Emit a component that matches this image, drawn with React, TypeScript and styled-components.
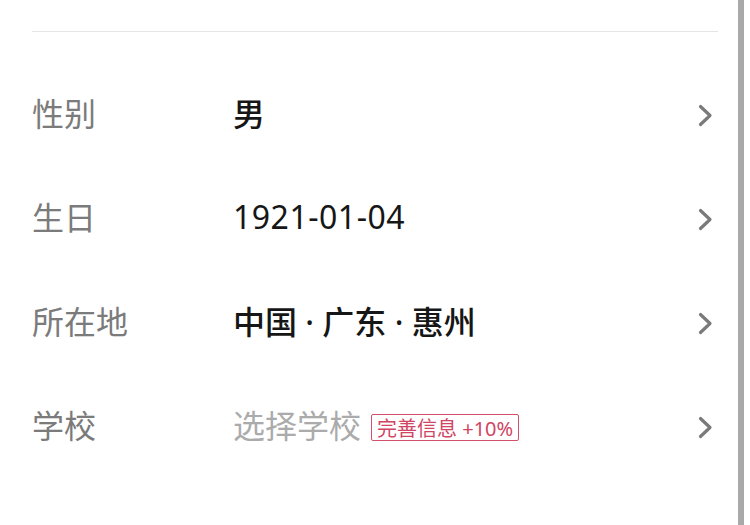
import React from 'react';
import styled, { createGlobalStyle } from 'styled-components';

const GlobalStyle = createGlobalStyle`
  html, body {
    margin: 0;
    padding: 0;
    background: #ffffff;
    font-family: "Noto Sans", "Noto Sans CJK SC", sans-serif;
  }
`;

const Page = styled.div`
  display: flex;
  width: 750px;
  height: 525px;
  overflow: hidden;
  background: #ffffff;
`;

const Content = styled.div`
  flex: 1;
  padding: 31px 20px 0 32px;
`;

const Divider = styled.div`
  height: 1px;
  background: #e6e6e6;
  margin-bottom: 31px;
`;

const List = styled.div`
  display: flex;
  flex-direction: column;
`;

const Row = styled.div`
  display: flex;
  align-items: center;
  height: 104px;
  padding-right: 5px;
`;

const Label = styled.div`
  width: 201px;
  flex-shrink: 0;
  padding-bottom: 6px;
  font-size: 32px;
  color: #7b7b7b;
  font-family: "Noto Sans CJK SC", sans-serif;
`;

const Value = styled.div<{ $placeholder?: boolean }>`
  flex: 1;
  display: flex;
  align-items: center;
  padding-bottom: 6px;
  font-size: 32px;
  font-weight: ${p => (p.$placeholder ? 400 : 500)};
  color: ${p => (p.$placeholder ? '#ababab' : '#161616')};
  white-space: pre;
`;

const Digits = styled.span`
  font-weight: 400;
  letter-spacing: 0.5px;
`;

const Tag = styled.span`
  margin-left: 10px;
  margin-top: 6px;
  height: 27px;
  box-sizing: border-box;
  display: inline-flex;
  align-items: center;
  padding: 0 5px;
  border: 1px solid #d2506c;
  border-radius: 2px;
  font-size: 20px;
  font-weight: 400;
  color: #cf4563;
  font-family: "Noto Sans", "Noto Sans CJK SC", sans-serif;
`;

const Chevron = styled.svg`
  width: 15px;
  height: 23px;
  flex-shrink: 0;
`;

const ScrollTrack = styled.div`
  width: 12px;
  display: flex;
`;

const ScrollThumb = styled.div`
  width: 6px;
  background: #a9a9a9;
`;

const Arrow: React.FC = () => (
  <Chevron viewBox="0 0 15 23">
    <polyline
      points="2.5,2.5 12,11.5 2.5,20.5"
      fill="none"
      stroke="#7a7a7a"
      strokeWidth="3.2"
      strokeLinecap="round"
      strokeLinejoin="round"
    />
  </Chevron>
);

const App: React.FC = () => (
  <>
    <GlobalStyle />
    <Page>
      <Content>
        <Divider />
        <List>
          <Row>
            <Label>性别</Label>
            <Value>男</Value>
            <Arrow />
          </Row>
          <Row>
            <Label>生日</Label>
            <Value>
              <Digits>1921-01-04</Digits>
            </Value>
            <Arrow />
          </Row>
          <Row>
            <Label>所在地</Label>
            <Value>中国 · 广东 · 惠州</Value>
            <Arrow />
          </Row>
          <Row>
            <Label>学校</Label>
            <Value $placeholder>
              选择学校
              <Tag>完善信息 +10%</Tag>
            </Value>
            <Arrow />
          </Row>
        </List>
      </Content>
      <ScrollTrack>
        <ScrollThumb />
      </ScrollTrack>
    </Page>
  </>
);

export default App;
